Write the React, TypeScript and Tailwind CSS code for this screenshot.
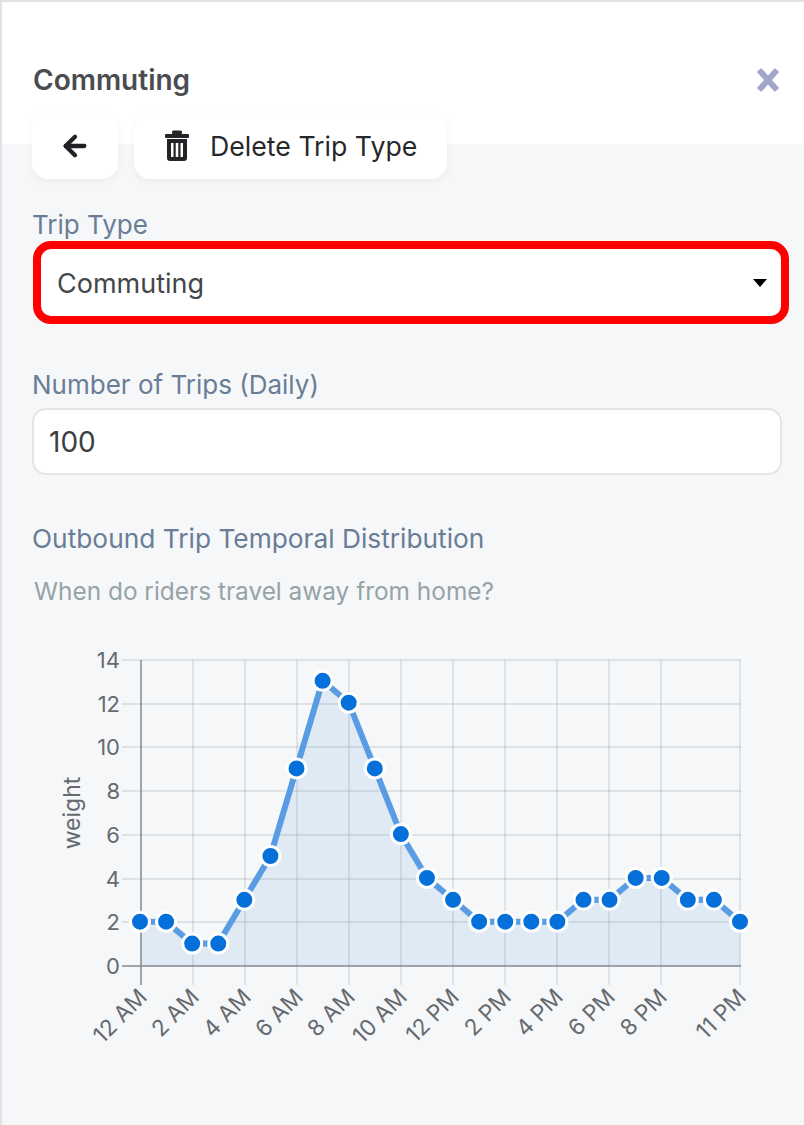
import React from "react";
import { ArrowLeft } from "lucide-react";

const data = [2, 2, 1, 1, 3, 5, 9, 13, 12, 9, 6, 4, 3, 2, 2, 2, 2, 3, 3, 4, 4, 3, 3, 2];
const px = (i: number) => 140 + (i * 600) / 23;
const py = (v: number) => 965.5 - v * 21.9;
const SY = 640;
const gridY = [660, 704, 747, 791, 835, 879, 922];
const gridX = [193, 245, 297, 349, 401, 453, 505, 557, 609, 661, 740];
const yLabels = [14, 12, 10, 8, 6, 4, 2, 0];
const xLabels: [number, string][] = [
  [141, "12 AM"], [193, "2 AM"], [245, "4 AM"], [297, "6 AM"], [349, "8 AM"], [401, "10 AM"],
  [453, "12 PM"], [505, "2 PM"], [557, "4 PM"], [609, "6 PM"], [661, "8 PM"], [740, "11 PM"],
];

function Chart() {
  const line = data.map((v, i) => `${px(i)},${py(v) - SY}`).join(" ");
  const area = `141,${966 - SY} ${line} 740,${966 - SY}`;
  return (
    <svg width="804" height="440" viewBox="0 0 804 440" className="block" style={{ fontFamily: "Inter, 'Liberation Sans', sans-serif" }}>
      <polygon points={area} fill="#0b6fd6" fillOpacity="0.09" />
      {gridY.map((y) => (
        <line key={y} x1="122" x2="741" y1={y - SY} y2={y - SY} stroke="#5c6470" strokeOpacity="0.19" strokeWidth="1.5" />
      ))}
      {gridX.map((x) => (
        <line key={x} x1={x} x2={x} y1={20} y2={345} stroke="#5c6470" strokeOpacity="0.18" strokeWidth="1.5" />
      ))}
      <line x1="141" x2="141" y1={20} y2={345} stroke="#85888f" strokeWidth="1.5" />
      <line x1="122" x2="741" y1={326} y2={326} stroke="#85888f" strokeWidth="1.5" />
      <polyline points={line} fill="none" stroke="#5a9ce4" strokeWidth="6" />
      {data.map((v, i) => (
        <circle key={i} cx={px(i)} cy={py(v) - SY} r="9.5" fill="#0570da" stroke="#ffffff" strokeWidth="3" />
      ))}
      {yLabels.map((v, i) => (
        <text key={v} x="120" y={[660, 704, 747, 791, 835, 879, 922, 966][i] - SY + 8} textAnchor="end" fontSize="22" fill="#666a70">
          {v}
        </text>
      ))}
      {xLabels.map(([x, t]) => (
        <text key={t} x={x - 5} y={346} textAnchor="end" fontSize="22.5" fill="#666a70" transform={`rotate(-45 ${x - 5} 346)`} dominantBaseline="hanging">
          {t}
        </text>
      ))}
      <text x="0" y="0" fontSize="23" fill="#666a70" textAnchor="middle" transform={`translate(80 173) rotate(-90)`}>
        weight
      </text>
    </svg>
  );
}

function TrashIcon() {
  return (
    <svg width="26" height="32" viewBox="0 0 26 32" fill="#222427">
      <rect x="1" y="4" width="24" height="4" rx="1" />
      <rect x="8" y="0.5" width="10" height="4" rx="1.5" />
      <path fillRule="evenodd" d="M3 9h20v19a3 3 0 0 1-3 3H6a3 3 0 0 1-3-3V9Zm4 4v14h2.5V13H7Zm4.7 0v14h2.6V13h-2.6Zm4.8 0v14H19V13h-2.5Z" />
    </svg>
  );
}

export default function App() {
  return (
    <div className="w-[804px] h-[1125px] overflow-hidden bg-[#f5f7f9] border-t-2 border-l-2 border-[#e1e2e8]" style={{ fontFamily: "Inter, 'Liberation Sans', sans-serif" }}>
      <div className="h-[142px] bg-white pl-[31px] pr-[24px] pt-[60px] flex items-start justify-between">
        <h1 className="text-[28px] leading-[36px] font-semibold text-[#4a4c50]">Commuting</h1>
        <svg width="24" height="26" viewBox="0 0 24 26" className="mt-[5px]">
          <path d="M3 3L21 23M21 3L3 23" stroke="#a0a6cc" strokeWidth="6" />
        </svg>
      </div>
      <div className="-mt-[31px] pl-[30px] flex gap-[16px]">
        <button className="w-[86px] h-[66px] bg-white rounded-[16px] shadow-[0_2px_8px_rgba(0,0,0,0.05)] flex items-center justify-center text-[#1f2124]">
          <ArrowLeft size={32} strokeWidth={3.2} />
        </button>
        <button className="w-[313px] h-[66px] bg-white rounded-[16px] shadow-[0_2px_8px_rgba(0,0,0,0.05)] flex items-center pl-[30px] gap-[20px] text-[26.7px] text-[#26282b]">
          <TrashIcon />
          <span>Delete Trip Type</span>
        </button>
      </div>
      <div className="pl-[30px] pt-[30px]">
        <label className="block text-[26px] leading-[32px] text-[#6a7d97]">Trip Type</label>
        <div className="mt-[0px] ml-[1px] w-[756px] h-[83px] border-[8px] border-[#fe0000] rounded-[18px] bg-white flex items-center justify-between pl-[16px] pr-[14px]">
          <span className="text-[27px] text-[#44474a] pt-[4px]">Commuting</span>
          <span className="w-0 h-0 border-x-[7px] border-x-transparent border-t-[8px] border-t-black" />
        </div>
        <label className="block mt-[45px] text-[26px] leading-[32px] text-[#6a7d97]">Number of Trips (Daily)</label>
        <div className="mt-[7px] w-[750px] h-[67px] bg-white border-2 border-[#e3e5e6] rounded-[14px] flex items-center pl-[15px] text-[28px] text-[#3c3e41]">100</div>
        <label className="block mt-[48px] text-[26.3px] leading-[32px] text-[#6a7d97]">Outbound Trip Temporal Distribution</label>
        <p className="mt-[20px] ml-[2px] text-[24.4px] leading-[32px] text-[#95a3a6]">When do riders travel away from home?</p>
      </div>
      <div className="-ml-[2px] mt-[33px]">
        <Chart />
      </div>
    </div>
  );
}
